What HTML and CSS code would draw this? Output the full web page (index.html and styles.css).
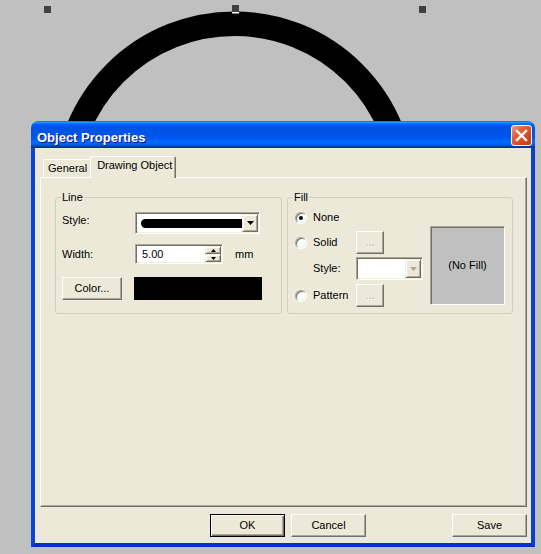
FILE: index.html
```html
<!DOCTYPE html>
<html>
<head>
<meta charset="utf-8">
<title>Object Properties</title>
<link rel="stylesheet" href="styles.css">
</head>
<body>
<svg class="canvas" width="541" height="400" viewBox="0 0 541 400">
  <circle cx="234.5" cy="192.5" r="168.8" fill="none" stroke="#000" stroke-width="24.6"/>
  <rect x="44" y="6" width="7" height="7" fill="#404040"/>
  <rect x="232" y="5" width="7" height="7" fill="#404040"/>
  <rect x="232" y="12" width="7" height="1.5" fill="#fff"/>
  <rect x="419" y="6" width="7" height="7" fill="#404040"/>
</svg>

<div class="window">
  <div class="titlebar">
    <span class="title">Object Properties</span>
    <span class="close">
      <svg width="19" height="19" viewBox="0 0 19 19"><path d="M5 5 L14 14 M14 5 L5 14" stroke="#fff" stroke-width="2.4" stroke-linecap="square"/></svg>
    </span>
  </div>
  <div class="frame">
    <div class="tabs">
      <div class="tab">General</div>
      <div class="tab selected">Drawing Object</div>
    </div>
    <div class="panel">
      <div class="group line-group">
        <span class="legend">Line</span>
        <div class="row style-row">
          <span class="lbl">Style:</span>
          <div class="combo">
            <div class="combo-value"><span class="linesample"></span></div>
            <span class="dropbtn"><svg width="7" height="4" viewBox="0 0 7 4"><polygon points="0,0 7,0 3.5,4" fill="#000"/></svg></span>
          </div>
        </div>
        <div class="row width-row">
          <span class="lbl">Width:</span>
          <div class="spin">
            <span class="spin-value">5.00</span>
            <span class="spin-btns">
              <span class="spin-btn"><svg width="5" height="3" viewBox="0 0 5 3"><polygon points="0,3 5,3 2.5,0" fill="#000"/></svg></span>
              <span class="spin-btn"><svg width="5" height="3" viewBox="0 0 5 3"><polygon points="0,0 5,0 2.5,3" fill="#000"/></svg></span>
            </span>
          </div>
          <span class="unit">mm</span>
        </div>
        <div class="row color-row">
          <button class="btn color-btn">Color...</button>
          <span class="swatch"></span>
        </div>
      </div>
      <div class="group fill-group">
        <span class="legend">Fill</span>
        <div class="fill-body">
          <div class="fill-options">
            <div class="opt opt-none"><span class="radio checked"></span><span class="opt-lbl">None</span></div>
            <div class="opt opt-solid"><span class="radio"></span><span class="opt-lbl">Solid</span><button class="btn dots" disabled>...</button></div>
            <div class="opt opt-style"><span class="opt-lbl indent">Style:</span>
              <div class="combo small disabled">
                <div class="combo-value"></div>
                <span class="dropbtn"><svg width="7" height="4" viewBox="0 0 7 4"><polygon points="0,0 7,0 3.5,4" fill="#ACA899"/></svg></span>
              </div>
            </div>
            <div class="opt opt-pattern"><span class="radio"></span><span class="opt-lbl">Pattern</span><button class="btn dots" disabled>...</button></div>
          </div>
          <div class="preview">(No Fill)</div>
        </div>
      </div>
    </div>
    <div class="buttons">
      <button class="btn dlg default">OK</button>
      <button class="btn dlg">Cancel</button>
      <button class="btn dlg save">Save</button>
    </div>
  </div>
</div>
</body>
</html>
```
FILE: styles.css
```css
* { box-sizing: border-box; }
html, body { margin: 0; padding: 0; }
body {
  width: 541px; height: 554px; overflow: hidden; position: relative;
  background: #C0C0C0;
  font-family: "Liberation Sans", Arial, sans-serif;
  font-size: 11px; line-height: 13px; color: #000;
}
.canvas { position: absolute; left: 0; top: 0; }

.window {
  position: absolute; left: 31px; top: 121px;
  width: 504px; height: 426px;
  display: flex; flex-direction: column;
}
.titlebar {
  flex: none; height: 27px;
  border-radius: 7px 7px 0 0;
  background: linear-gradient(to bottom, #0058EE 0%, #3593FF 4%, #288EFF 6%, #127DFF 8%, #036FFC 10%, #0262EE 14%, #0057E5 20%, #0054E3 24%, #0055EB 56%, #005BF5 66%, #026AFE 76%, #0062EF 86%, #0052D6 92%, #0040AB 94%, #003092 100%);
  display: flex; align-items: flex-start; justify-content: space-between;
  padding: 4px 3px 0 6px;
}
.title {
  margin-top: 5px;
  color: #fff; font-weight: bold; font-size: 13px; line-height: 16px;
  text-shadow: 1px 1px 0 #0F1089;
}
.close {
  width: 21px; height: 21px;
  border: 1px solid #fff; border-radius: 3px;
  background: linear-gradient(135deg, #F09A7C 0%, #E4613B 35%, #D8461F 70%, #C5391A 100%);
  display: flex; align-items: center; justify-content: center;
}
.close svg { display: block; }

.frame {
  flex: 1;
  background: #ECE9D8;
  border: 4px solid #0B47DA; border-top: 0;
  border-left-color: #0A45D8; border-right-color: #0A40D0; border-bottom-color: #0832C6;
  padding: 8px 4px 0 5px;
  display: flex; flex-direction: column;
}

.tabs {
  flex: none; height: 21px;
  display: flex; align-items: flex-end;
  padding-left: 3px;
  position: relative; z-index: 1;
}
.tab {
  height: 18px;
  padding: 2px 4px 0 4px;
  border-top: 1px solid #fff; border-left: 1px solid #fff;
  border-radius: 2px 2px 0 0;
  white-space: nowrap;
}
.tab.selected {
  height: 22px; margin-bottom: -1px; margin-left: -1px;
  padding: 2px 3px 0 6px;
  background: #ECE9D8;
  border-right: 1px solid #716F64;
  box-shadow: inset -1px 0 0 #ACA899;
}

.panel {
  flex: none; height: 330px;
  border: 1px solid; border-color: #fff #716F64 #716F64 #fff;
  box-shadow: inset -1px -1px 0 #ACA899;
  padding: 19px 13px 0 14px;
  display: flex; align-items: flex-start; gap: 5px;
}

.group {
  height: 117px;
  border: 1px solid #D0D0BF; border-radius: 3px;
  display: flex; flex-direction: column;
  padding-left: 6px;
}
.line-group { width: 227px; }
.fill-group { width: 226px; }
.legend {
  align-self: flex-start;
  height: 13px;
  margin: -7px 0 0 -1px; padding: 0 1px;
  background: #ECE9D8;
}

.row { display: flex; align-items: flex-start; }
.style-row { margin-top: 8px; }
.width-row { margin-top: 10px; }
.color-row { margin-top: 13px; }
.lbl { width: 73px; }
.style-row .lbl { padding-top: 2px; }
.width-row .lbl { padding-top: 4px; }

.combo, .spin {
  border: 1px solid; border-color: #ACA899 #fff #fff #ACA899;
  box-shadow: inset 1px 1px 0 #716F64, inset -1px -1px 0 #F1EFE2;
  background: #fff;
  padding: 1px;
  display: flex;
}
.combo { width: 125px; height: 22px; }
.combo.small { width: 67px; height: 23px; }
.combo-value {
  flex: 1; display: flex; align-items: center; padding-left: 4px;
}
.linesample {
  flex: 1; height: 9px; margin-top: 1px;
  background: #000; border-radius: 5px 0 0 5px;
}
.dropbtn, .spin-btn {
  background: #ECE9D8;
  border: 1px solid; border-color: #F1EFE2 #716F64 #716F64 #F1EFE2;
  box-shadow: inset 1px 1px 0 #fff, inset -1px -1px 0 #ACA899;
  display: flex; align-items: center; justify-content: center;
}
.dropbtn { width: 16px; }
.dropbtn svg, .spin-btn svg { display: block; }

.spin { width: 88px; height: 20px; }
.spin-value { flex: 1; padding-left: 5px; align-self: center; }
.spin-btns { width: 16px; display: flex; flex-direction: column; }
.spin-btn { flex: 1; }
.unit { margin-left: 12px; padding-top: 4px; }

.btn {
  font: inherit; color: #000; margin: 0;
  background: #ECE9D8;
  border: 1px solid; border-color: #fff #716F64 #716F64 #fff;
  box-shadow: inset -1px -1px 0 #ACA899;
  padding: 0;
  display: flex; align-items: center; justify-content: center;
}
.color-btn { width: 60px; height: 23px; }
.swatch { width: 128px; height: 23px; margin-left: 12px; background: #000; }

.fill-body { flex: 1; display: flex; }
.fill-options { padding-left: 1px; display: flex; flex-direction: column; }
.opt { display: flex; align-items: center; }
.opt-none { margin-top: 7px; height: 13px; }
.opt-solid { margin-top: 7px; height: 23px; }
.opt-style { margin-top: 3px; height: 23px; }
.opt-pattern { margin-top: 4px; height: 23px; }
.opt-lbl { width: 43px; }
.opt-lbl.indent { margin-left: 18px; }
.radio {
  width: 12px; height: 12px; margin-right: 6px; border-radius: 50%;
  background: #fff;
  border: 1px solid; border-color: #ACA899 #fff #fff #ACA899;
  box-shadow: inset 1px 1px 0 #716F64, inset -1px -1px 0 #F1EFE2;
  display: flex; align-items: center; justify-content: center;
}
.radio.checked::after {
  content: ""; width: 4px; height: 4px; border-radius: 50%; background: #000;
}
.dots {
  width: 28px; height: 23px;
  color: #ACA899; text-shadow: 1px 1px 0 #fff;
}
.preview {
  width: 75px; height: 79px;
  margin: 22px 7px 0 auto;
  background: #C0C0C0;
  border: 1px solid; border-color: #ACA899 #fff #fff #ACA899;
  box-shadow: inset 1px 1px 0 #716F64;
  display: flex; align-items: center; justify-content: center;
}

.buttons {
  flex: none; display: flex;
  margin-top: 7px;
  padding: 0 0 0 170px;
}
.dlg { width: 75px; height: 23px; }
.dlg + .dlg { margin-left: 6px; }
.dlg.save { margin-left: auto; }
.dlg.default {
  border: 1px solid #000;
  box-shadow: inset 1px 1px 0 #fff, inset -1px -1px 0 #716F64, inset -2px -2px 0 #ACA899;
}
```
